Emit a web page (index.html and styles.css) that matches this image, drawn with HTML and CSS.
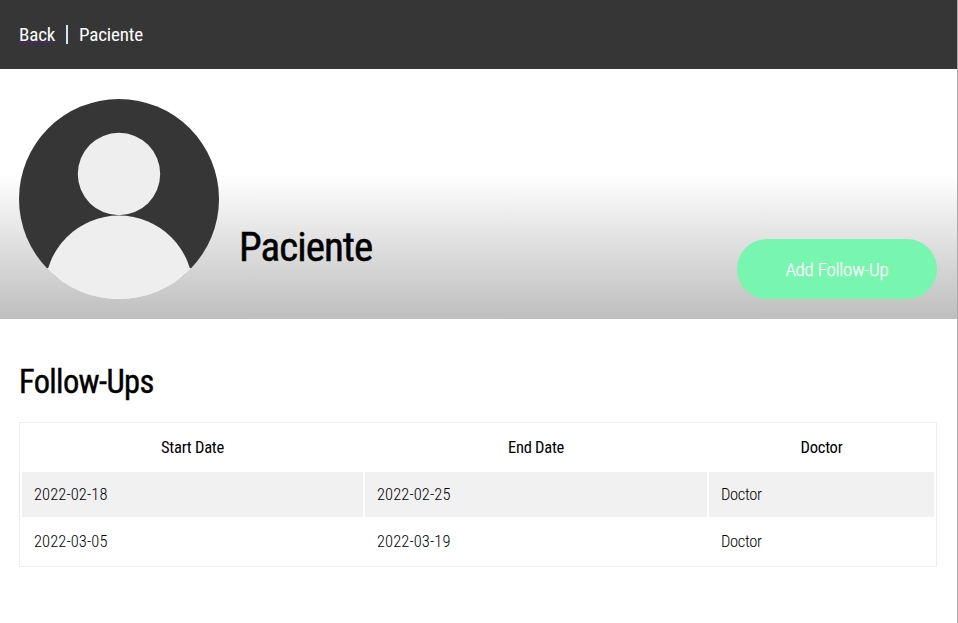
FILE: index.html
```html
<!DOCTYPE html>
<html lang="en">
<head>
<meta charset="utf-8">
<title>Paciente</title>
<link rel="stylesheet" href="styles.css">
</head>
<body>
<div class="page">
<header class="topbar"><a class="back" href="#"><span>Back</span></a><span class="divider"></span><span>Paciente</span></header>
<section class="hero">
<svg class="avatar" viewBox="0 0 200 200"><defs><clipPath id="disc"><circle cx="100" cy="100" r="100"/></clipPath></defs><g clip-path="url(#disc)"><rect width="200" height="180" fill="#363636"/><rect y="169" width="200" height="31" fill="#eee"/><circle cx="100" cy="75" r="41.2" fill="#eee"/><circle cx="100" cy="190.5" r="74" fill="#eee"/></g></svg>
<h1>Paciente</h1>
<button class="add">Add Follow-Up</button>
</section>
<main>
<h2>Follow-Ups</h2>
<table>
<colgroup><col class="date"><col class="date end"><col></colgroup>
<thead><tr><th>Start Date</th><th>End Date</th><th>Doctor</th></tr></thead>
<tbody>
<tr><td>2022-02-18</td><td>2022-02-25</td><td class="doctor">Doctor</td></tr>
<tr><td>2022-03-05</td><td>2022-03-19</td><td class="doctor">Doctor</td></tr>
</tbody>
</table>
</main>
</div>
</body>
</html>
```
FILE: styles.css
```css
body{margin:0;font-family:"Roboto",sans-serif;font-stretch:75%;color:#000}
.page{box-sizing:border-box;width:958px;border-right:1px solid #aaa;min-height:623px}
.topbar{height:69px;background:#363636;color:#fff;display:flex;align-items:center;padding:0 19px;font-size:19px;font-weight:400;letter-spacing:-.15px}
.back{color:#551a8b;text-decoration:underline;text-underline-offset:1px;text-decoration-thickness:1px;width:36px}
.back span{color:#fff}
.divider{width:2px;height:19px;margin:0 11px;background:#cfe8f5}
.hero{height:250px;box-sizing:border-box;padding:30px 20px 20px 19px;display:flex;align-items:flex-end;gap:20px;background:linear-gradient(#fff 42%,#bebebe)}
.avatar{width:200px;height:200px;display:block}
h1{margin:0 0 27px;font-size:41px;line-height:50px;font-weight:450;letter-spacing:-.95px;-webkit-text-stroke:.5px #000}
.add{margin-left:auto;width:200px;height:60px;border:0;border-radius:30px;background:#78f5ae;color:#fff;font-family:inherit;font-stretch:75%;font-size:19px;font-weight:350;letter-spacing:-.25px;-webkit-text-stroke:.25px #fff}
main{padding:43px 20px 0 19px}
h2{margin:0 0 20px;font-size:32.5px;line-height:40px;font-weight:450;letter-spacing:-.65px;-webkit-text-stroke:.4px #000}
table{width:100%;height:145px;box-sizing:border-box;border:1px solid #eee;border-spacing:2px;table-layout:fixed;font-size:16.5px;line-height:21px}
.date{width:341px}
.end{width:342px}
th{padding:12px;font-weight:450;letter-spacing:-.25px}
td{padding:12px;font-weight:300;letter-spacing:.08px}
.doctor{letter-spacing:-.35px}
tbody tr:nth-child(odd) td{background:#f1f1f1}
```
